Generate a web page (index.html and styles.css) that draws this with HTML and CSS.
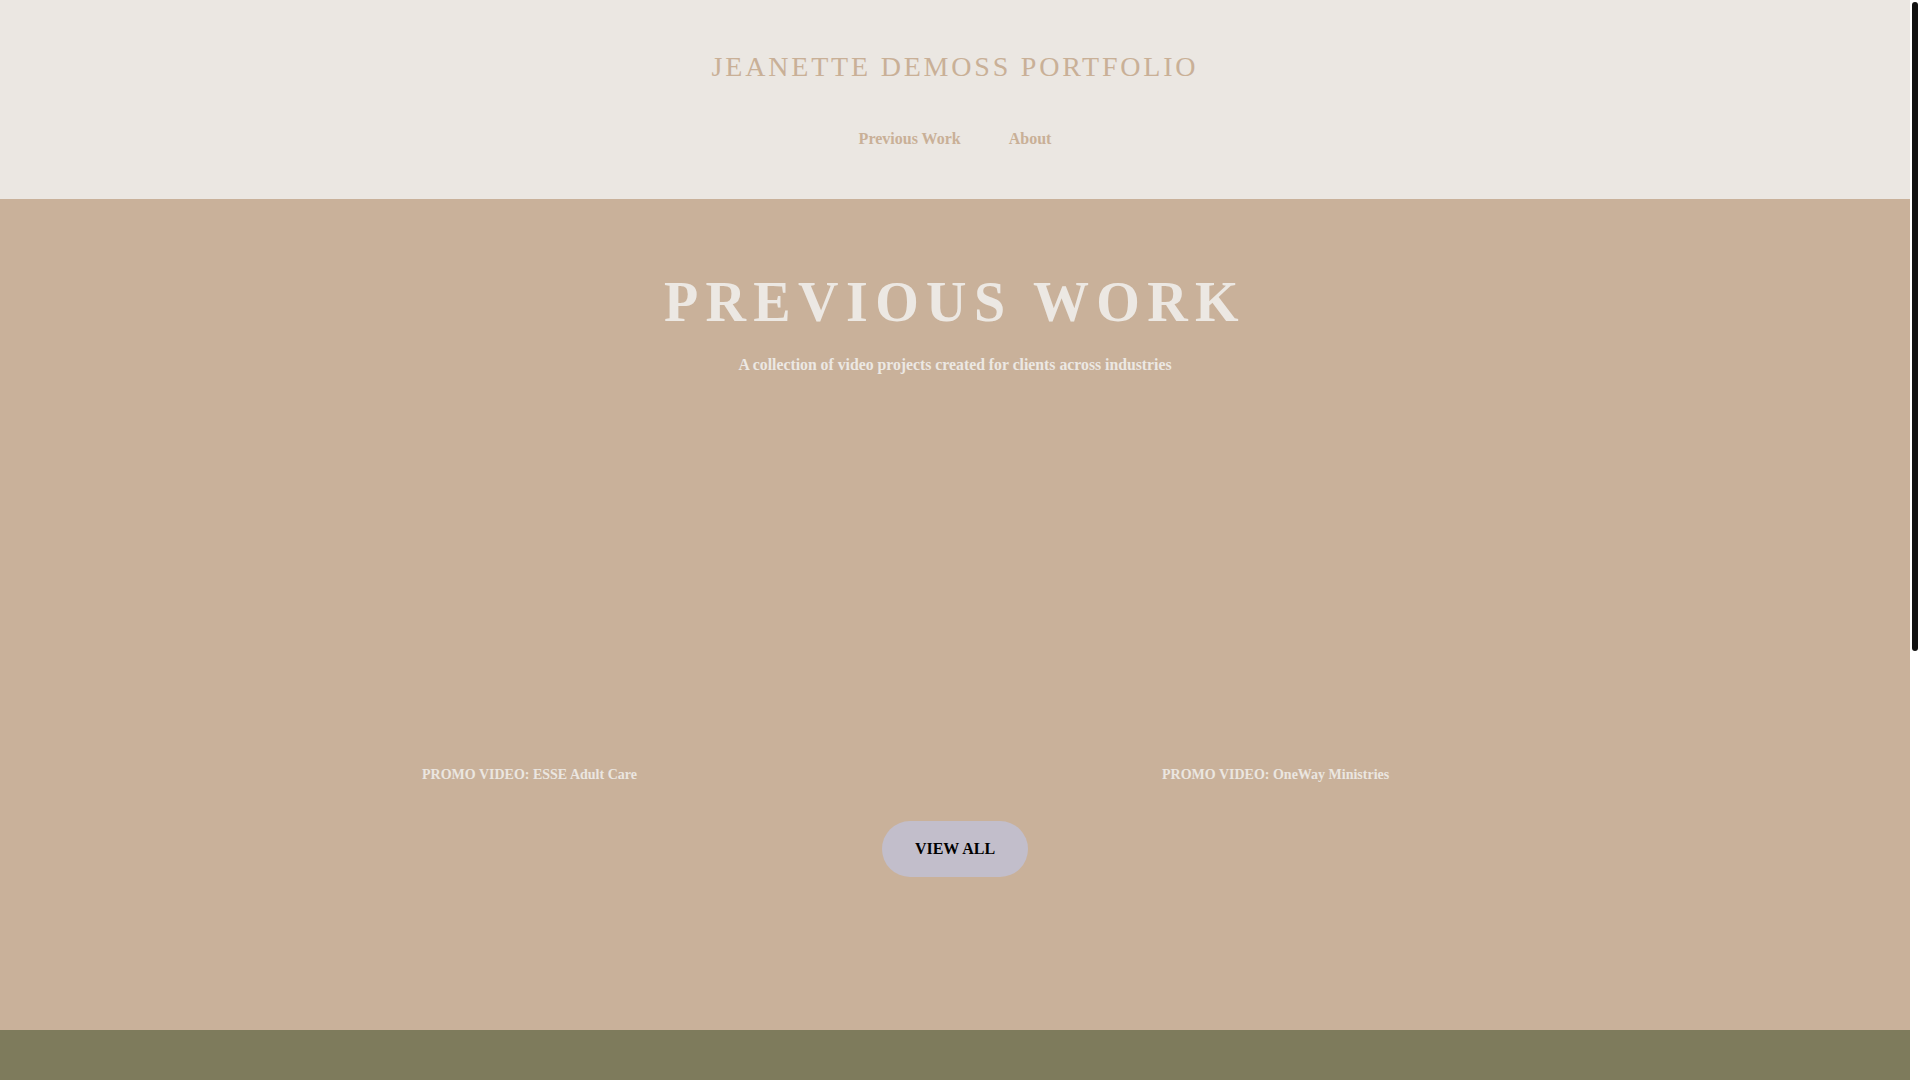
FILE: index.html
```html
<!DOCTYPE html>
<html lang="en">
<head>
<meta charset="utf-8">
<title>Jeanette DeMoss Portfolio</title>
<link rel="stylesheet" href="styles.css">
</head>
<body>
<div class="page">
  <header class="site-header">
    <h1 class="site-title">JEANETTE DEMOSS PORTFOLIO</h1>
    <nav class="site-nav">
      <a class="nav-link" href="#work">Previous Work</a>
      <a class="nav-link" href="#about">About</a>
    </nav>
  </header>
  <main>
    <section class="work" id="work">
      <h2 class="work-title">PREVIOUS WORK</h2>
      <p class="work-sub">A collection of video projects created for clients across industries</p>
      <div class="video-grid">
        <div class="video-item">
          <div class="video-frame"></div>
          <p class="video-caption">PROMO VIDEO: ESSE Adult Care</p>
        </div>
        <div class="video-item">
          <div class="video-frame"></div>
          <p class="video-caption">PROMO VIDEO: OneWay Ministries</p>
        </div>
      </div>
      <a class="view-all" href="#work">VIEW ALL</a>
    </section>
    <section class="about" id="about"></section>
  </main>
</div>
<div class="scrollbar" aria-hidden="true"><div class="scrollbar-thumb"></div></div>
</body>
</html>
```
FILE: styles.css
```css
html {
  background: #ffffff;
  scrollbar-width: none;
}
html::-webkit-scrollbar {
  display: none;
}
body {
  margin: 0;
  font-family: "Liberation Serif", "Times New Roman", serif;
}
.page {
  width: calc(100% - 10px);
}
.scrollbar {
  position: fixed;
  top: 0;
  right: 0;
  width: 10px;
  height: 100vh;
  background: #ffffff;
  box-sizing: border-box;
  padding: 2px 2px 0;
}
.scrollbar-thumb {
  height: 649px;
  background: #111111;
  border-radius: 3px;
}
.site-header {
  background: #ebe7e2;
  height: 199px;
  box-sizing: border-box;
  padding-top: 51px;
  display: flex;
  flex-direction: column;
  align-items: center;
}
.site-title {
  margin: 0;
  font-size: 28px;
  font-weight: 400;
  line-height: 32px;
  letter-spacing: 0.1em;
  color: #c9b097;
}
.site-nav {
  margin-top: 47px;
  display: flex;
  gap: 48px;
}
.nav-link {
  font-size: 16px;
  font-weight: 700;
  color: #c9b097;
  text-decoration: none;
  line-height: 18px;
}
.work {
  background: #c9b19a;
  height: 831px;
  box-sizing: border-box;
  padding-top: 71px;
  display: flex;
  flex-direction: column;
  align-items: center;
}
.work-title {
  margin: 0;
  font-size: 56px;
  font-weight: 700;
  line-height: 64px;
  letter-spacing: 7.4px;
  color: #ece8e3;
}
.work-sub {
  margin: 22px 0 0;
  font-size: 15.75px;
  font-weight: 700;
  line-height: 18px;
  color: #ece8e3;
}
.video-grid {
  margin-top: 32px;
  display: grid;
  grid-template-columns: 326px 326px;
  column-gap: 414px;
}
.video-item {
  display: flex;
  flex-direction: column;
}
.video-frame {
  height: 361px;
}
.video-caption {
  margin: 0;
  font-size: 14px;
  font-weight: 700;
  line-height: 16px;
  color: #ebe6e0;
  white-space: nowrap;
}
.view-all {
  margin-top: 38px;
  height: 56px;
  box-sizing: border-box;
  padding: 0 33px;
  display: flex;
  align-items: center;
  border-radius: 28px;
  background: #c2becb;
  color: #000000;
  font-size: 16px;
  font-weight: 700;
  text-decoration: none;
}
.about {
  background: #7e7b5c;
  height: 767px;
}
```
